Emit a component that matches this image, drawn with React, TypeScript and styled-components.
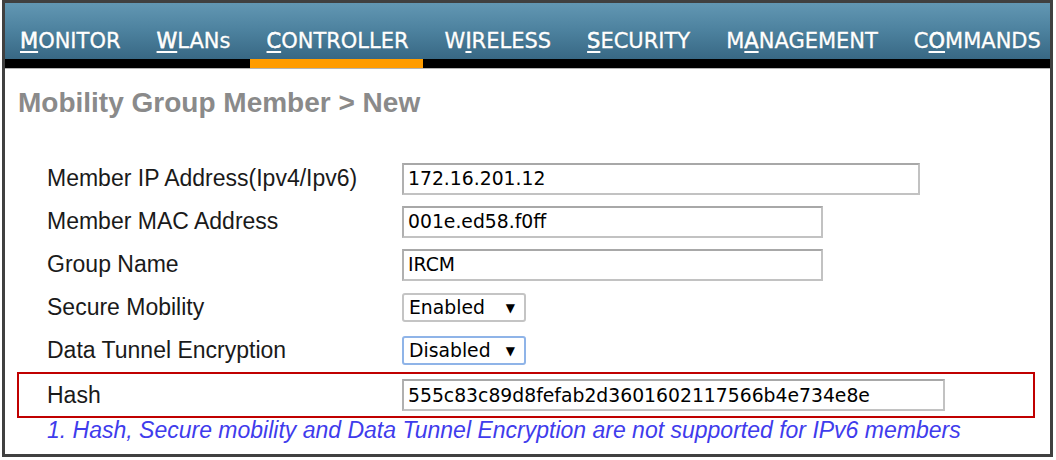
import { FC } from 'react';
import styled, { createGlobalStyle } from 'styled-components';

const GlobalStyle = createGlobalStyle`
  html, body {
    margin: 0;
    padding: 0;
    background: #ffffff;
  }
`;

const Frame = styled.div`
  box-sizing: border-box;
  margin-left: 2px;
  width: 1051px;
  height: 457px;
  border: 3px solid #404040;
  background: #ffffff;
  overflow: hidden;
`;

const NavBar = styled.nav`
  display: flex;
  height: 65px;
  background: linear-gradient(
    to bottom,
    #6297b3 0px,
    #4c819e 28px,
    #386884 56px,
    #000000 56px,
    #000000 65px
  );
  border-bottom: 1px solid #b4b4b4;
`;

const NavItem = styled.div<{ $active?: boolean }>`
  box-sizing: border-box;
  display: flex;
  align-items: center;
  height: 65px;
  padding: 19px 14px 0 16px;
  margin-right: 6px;
  border-bottom: 9px solid ${(p) => (p.$active ? '#ff9c00' : 'transparent')};
  font-family: 'DejaVu Sans', Verdana, sans-serif;
  font-size: 21px;
  color: #ffffff;
  -webkit-text-stroke: 0.35px #ffffff;
  text-shadow: 0 0 1px rgba(0, 0, 0, 0.35);
  white-space: nowrap;

  &:first-child {
    padding-left: 15px;
  }

  u {
    text-underline-offset: 3px;
    text-decoration-thickness: 1.5px;
  }
`;

const Title = styled.h1`
  margin: 18px 0 0 13px;
  font-family: 'Liberation Sans', Arial, sans-serif;
  font-size: 28px;
  line-height: 32px;
  font-weight: bold;
  color: #8a8a8a;
`;

const Form = styled.div`
  margin-top: 38px;
  padding-left: 42px;
`;

const Row = styled.div<{ $highlight?: boolean }>`
  box-sizing: border-box;
  display: grid;
  grid-template-columns: 355px 1fr;
  align-items: center;
  height: ${(p) => (p.$highlight ? '46px' : '43px')};
  ${(p) =>
    p.$highlight &&
    `
    margin: 0 15px 0 -30px;
    padding-left: 28px;
    border: 2px solid #c00000;
  `}
`;

const Label = styled.div`
  font-family: 'Liberation Sans', Arial, sans-serif;
  font-size: 23px;
  color: #1a1a1a;
`;

const TextBox = styled.input<{ $width: number }>`
  box-sizing: border-box;
  width: ${(p) => p.$width}px;
  height: 32px;
  margin: 0;
  padding: 0 0 0 4px;
  border: 2px solid #c2c2c2;
  border-top-color: #a8a8a8;
  border-left-color: #b0b0b0;
  background: #ffffff;
  font-family: 'DejaVu Sans', Verdana, sans-serif;
  font-size: 18.8px;
  color: #000000;
  outline: none;
`;

const SelectBox = styled.div<{ $focused?: boolean }>`
  box-sizing: border-box;
  display: flex;
  align-items: center;
  justify-content: space-between;
  width: 124px;
  height: 29px;
  padding: 0 9px 0 5px;
  border: 2px solid ${(p) => (p.$focused ? '#8fb4e8' : '#c4c4c4')};
  border-radius: 3px;
  background: #ffffff;
  font-family: 'DejaVu Sans', Verdana, sans-serif;
  font-size: 18.8px;
  color: #000000;
`;

const Arrow = styled.span`
  font-size: 12px;
  color: #000000;
`;

const Note = styled.div`
  font-family: 'Liberation Sans', Arial, sans-serif;
  font-style: italic;
  font-size: 23px;
  line-height: 24px;
  color: #3f3cec;
`;

type NavEntry = { pre: string; key: string; post: string; active?: boolean };

const navEntries: NavEntry[] = [
  { pre: '', key: 'M', post: 'ONITOR' },
  { pre: '', key: 'W', post: 'LANs' },
  { pre: '', key: 'C', post: 'ONTROLLER', active: true },
  { pre: 'W', key: 'I', post: 'RELESS' },
  { pre: '', key: 'S', post: 'ECURITY' },
  { pre: 'M', key: 'A', post: 'NAGEMENT' },
  { pre: 'C', key: 'O', post: 'MMANDS' },
];

const Select: FC<{ value: string; focused?: boolean }> = ({ value, focused }) => (
  <SelectBox $focused={focused}>
    <span>{value}</span>
    <Arrow>▼</Arrow>
  </SelectBox>
);

const App: FC = () => {
  return (
    <>
      <GlobalStyle />
      <Frame>
        <NavBar>
          {navEntries.map((n) => (
            <NavItem key={n.key + n.post} $active={n.active}>
              {n.pre}
              <u>{n.key}</u>
              {n.post}
            </NavItem>
          ))}
        </NavBar>
        <Title>Mobility Group Member &gt; New</Title>
        <Form>
          <Row>
            <Label>Member IP Address(Ipv4/Ipv6)</Label>
            <TextBox $width={518} defaultValue="172.16.201.12" readOnly />
          </Row>
          <Row>
            <Label>Member MAC Address</Label>
            <TextBox $width={421} defaultValue="001e.ed58.f0ff" readOnly />
          </Row>
          <Row>
            <Label>Group Name</Label>
            <TextBox $width={421} defaultValue="IRCM" readOnly />
          </Row>
          <Row>
            <Label>Secure Mobility</Label>
            <Select value="Enabled" />
          </Row>
          <Row>
            <Label>Data Tunnel Encryption</Label>
            <Select value="Disabled" focused />
          </Row>
          <Row $highlight>
            <Label>Hash</Label>
            <TextBox
              $width={543}
              defaultValue="555c83c89d8fefab2d3601602117566b4e734e8e"
              readOnly
            />
          </Row>
          <Note>
            1. Hash, Secure mobility and Data Tunnel Encryption are not supported for IPv6 members
          </Note>
        </Form>
      </Frame>
    </>
  );
};

export default App;
